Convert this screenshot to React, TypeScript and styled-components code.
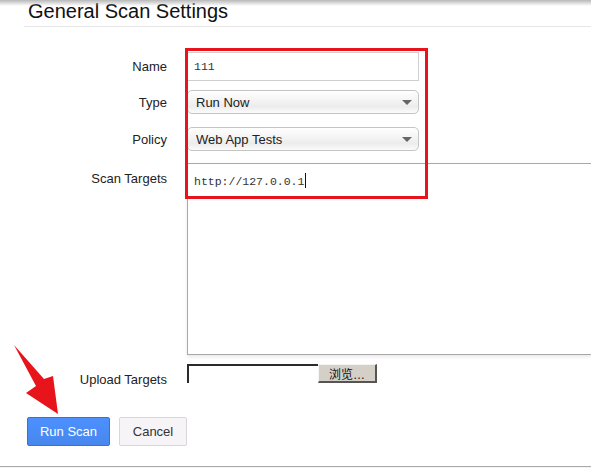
import * as React from 'react'
import styled, { createGlobalStyle } from 'styled-components'

const GlobalStyle = createGlobalStyle`
	html, body {
		margin: 0;
		padding: 0;
		background: #fff;
		overflow: hidden;
	}
	body {
		font-family: "Liberation Sans", Arial, sans-serif;
		color: #222;
	}
`

const Page = styled.div`
	position: relative;
	width: 591px;
	height: 468px;
	overflow: hidden;
	background: #fff;

	&::before {
		content: '';
		position: absolute;
		left: 0;
		right: 0;
		top: 0;
		height: 6px;
		background: linear-gradient(#b8b8b8, rgba(255, 255, 255, 0));
	}
`

const Header = styled.div`
	margin-left: 24px;
	height: 27px;
	border-bottom: 1px solid #e6e6e6;
	box-sizing: border-box;
`

const Title = styled.h1`
	margin: 0;
	padding: 0 0 0 4px;
	font-size: 20px;
	font-weight: normal;
	line-height: 22px;
	color: #111;
`

const Form = styled.div`
	padding-top: 25px;
`

const Row = styled.div<{ $below: number; $align?: string }>`
	display: flex;
	align-items: ${(p) => p.$align || 'center'};
	margin-bottom: ${(p) => p.$below}px;
`

const Label = styled.div<{ $top?: number }>`
	width: 167px;
	flex: none;
	margin-right: 20px;
	padding-top: ${(p) => p.$top || 0}px;
	text-align: right;
	font-size: 13px;
	line-height: 15px;
	color: #222;
`

const TextInput = styled.div`
	box-sizing: border-box;
	width: 232px;
	height: 29px;
	border: 1px solid #cfcfcf;
	padding: 0 6px;
	display: flex;
	align-items: center;
	font-family: "Liberation Mono", "Courier New", monospace;
	font-size: 11.5px;
	color: #333;
`

const Select = styled.div`
	position: relative;
	box-sizing: border-box;
	width: 232px;
	height: 24px;
	border: 1px solid #c4c4c4;
	border-radius: 5px;
	padding: 1px 8px 0;
	display: flex;
	align-items: center;
	background: linear-gradient(#ffffff 0%, #f3f3f3 45%, #ececec 70%, #fbfbfb 100%);
	font-size: 13px;
	color: #222;

	&::after {
		content: '';
		position: absolute;
		right: 6px;
		top: 9px;
		border-left: 5px solid transparent;
		border-right: 5px solid transparent;
		border-top: 5px solid #666;
	}
`

const TextArea = styled.div`
	box-sizing: border-box;
	width: 420px;
	height: 192px;
	border: 1px solid #a8a8a8;
	border-right: none;
	padding: 9px 6px;
	font-family: "Liberation Mono", "Courier New", monospace;
	font-size: 11.5px;
	color: #333;
	box-shadow: 0 2px 3px rgba(200, 190, 200, 0.35);
`

const Caret = styled.span`
	display: inline-block;
	width: 1px;
	height: 15px;
	margin-left: 1px;
	vertical-align: -3px;
	background: #111;
`

const FileField = styled.div`
	display: flex;
	height: 19px;
`

const FileBox = styled.div`
	box-sizing: border-box;
	width: 131px;
	height: 19px;
	border-top: 2px solid #2b2b2b;
	border-left: 2px solid #2b2b2b;
`

const FileButton = styled.div`
	box-sizing: border-box;
	width: 59px;
	height: 19px;
	background: #d4d0c8;
	border-top: 1px solid #f4f4f4;
	border-left: 1px solid #f4f4f4;
	border-right: 2px solid #555;
	border-bottom: 2px solid #555;
	display: flex;
	align-items: center;
	justify-content: center;
	font-family: "Liberation Sans", "Noto Sans CJK SC", sans-serif;
	font-size: 12px;
	color: #111;
`

const Actions = styled.div`
	display: flex;
	gap: 9px;
	margin-left: 27px;
`

const Button = styled.div<{ $primary?: boolean }>`
	box-sizing: border-box;
	height: 29px;
	padding: 0;
	white-space: nowrap;
	display: flex;
	align-items: center;
	justify-content: center;
	font-size: 13px;
	border-radius: 2px;
	color: ${(p) => (p.$primary ? '#fff' : '#333')};
	border: 1px solid ${(p) => (p.$primary ? '#3072de' : '#d8d6d8')};
	background: ${(p) =>
		p.$primary ? 'linear-gradient(#4d90fe, #4787ed)' : '#f6f4f6'};
	width: ${(p) => (p.$primary ? 83 : 68)}px;
`

const BottomRule = styled.div`
	position: absolute;
	left: 0;
	right: 0;
	top: 466px;
	height: 2px;
	border-top: 1px solid #aaa;
	background: #f6f3f6;
`

const Highlight = styled.div`
	position: absolute;
	left: 185px;
	top: 48px;
	width: 243px;
	height: 151px;
	box-sizing: border-box;
	border: 3px solid #e8141c;
	pointer-events: none;
`

const Arrow = styled.svg`
	position: absolute;
	left: 0;
	top: 340px;
	pointer-events: none;
`

const App = () => {
	return (
		<>
			<GlobalStyle />
			<Page>
				<Header>
					<Title>General Scan Settings</Title>
				</Header>
				<Form>
					<Row $below={9}>
						<Label>Name</Label>
						<TextInput>111</TextInput>
					</Row>
					<Row $below={13}>
						<Label>Type</Label>
						<Select>Run Now</Select>
					</Row>
					<Row $below={12}>
						<Label>Policy</Label>
						<Select>Web App Tests</Select>
					</Row>
					<Row $below={9} $align="flex-start">
						<Label $top={8}>Scan Targets</Label>
						<TextArea>
							http://127.0.0.1
							<Caret />
						</TextArea>
					</Row>
					<Row $below={30} $align="flex-start">
						<Label $top={8}>Upload Targets</Label>
						<FileField>
							<FileBox />
							<FileButton>浏览…</FileButton>
						</FileField>
					</Row>
					<Actions>
						<Button $primary>Run Scan</Button>
						<Button>Cancel</Button>
					</Actions>
				</Form>
				<BottomRule />
				<Highlight />
				<Arrow width="70" height="80" viewBox="0 0 70 80">
					<polygon
						points="14,5 44,39 53,36 58,74 26,53 36,46"
						fill="#e8141c"
					/>
				</Arrow>
			</Page>
		</>
	)
}

export default App
